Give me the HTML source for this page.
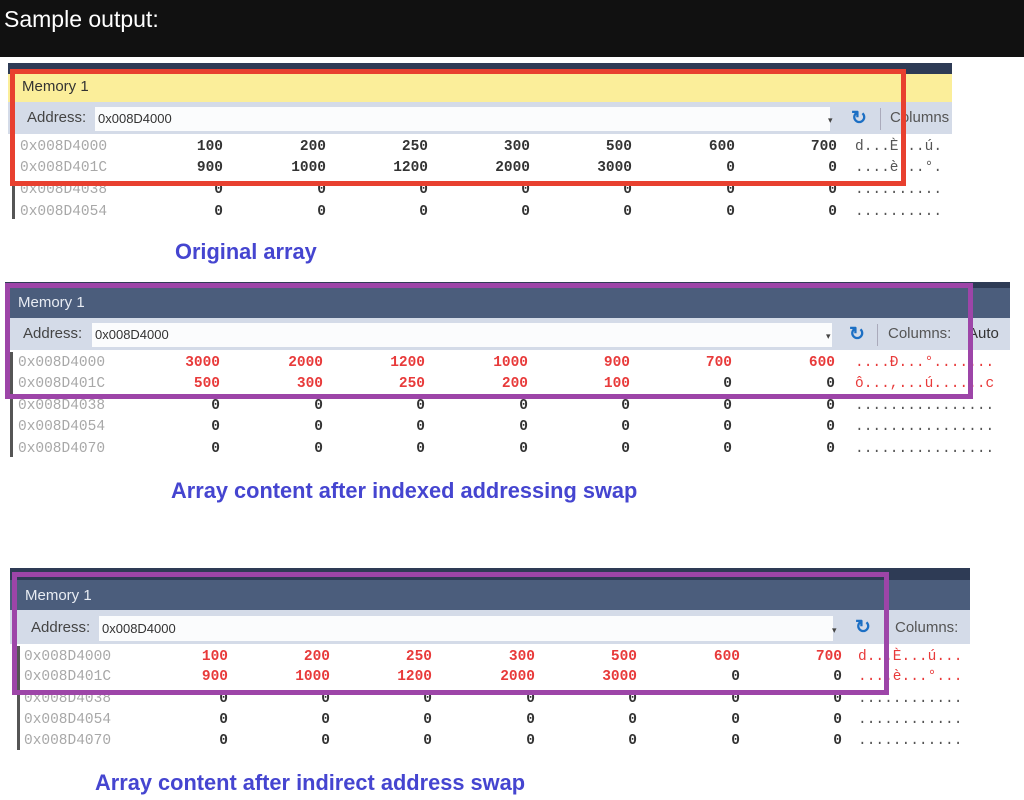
<!DOCTYPE html>
<html><head><meta charset="utf-8"><style>
*{margin:0;padding:0;box-sizing:border-box}
body{width:1024px;height:800px;background:#fff;position:relative;overflow:hidden;font-family:"Liberation Sans",sans-serif}
.a{position:absolute}
.hdr{left:0;top:0;width:1024px;height:57px;background:#111}
.hdr span{position:absolute;left:4px;top:6px;color:#fff;font-size:23px}
.row{position:absolute;height:20px;font-family:"Liberation Mono",monospace;font-size:14.5px;font-weight:bold;color:#333;white-space:nowrap;line-height:20px}
.row .ad{position:absolute;left:0;color:#a8a8a8;font-weight:normal}
.row .n{position:absolute;text-align:right;width:60px}
.row .s{position:absolute;color:#555;font-weight:normal;letter-spacing:0px}
.red{color:#e83a3a!important}
.ui{font-size:15px;color:#333}
.cap{position:absolute;color:#4545d0;font-weight:bold;font-size:21.8px;white-space:nowrap}
.box{position:absolute;border-style:solid}
</style></head><body>
<div class="a hdr"><span>Sample output:</span></div>

<!-- Panel 1 -->
<div class="a" style="left:8px;top:63px;width:944px;height:11px;background:#2e3b55"></div>
<div class="a" style="left:8px;top:74px;width:944px;height:28px;background:#fbee9a"></div>
<div class="a ui" style="left:22px;top:78px;">Memory 1</div>
<div class="a" style="left:8px;top:102px;width:944px;height:32px;background:#d4dbe8"></div>
<div class="a ui" style="left:27px;top:109px;color:#444">Address:</div>
<div class="a" style="left:95px;top:107px;width:735px;height:24px;background:#fbfcfd"></div>
<div class="a ui" style="left:98px;top:111px;font-size:13px">0x008D4000</div>
<div class="a" style="left:828px;top:115px;font-size:9px;color:#444">▾</div>
<div class="a" style="left:851px;top:107px;font-size:19px;color:#1c6fc4;font-weight:bold">↻</div>
<div class="a" style="left:880px;top:108px;width:1px;height:22px;background:#aab"></div>
<div class="a ui" style="left:890px;top:109px;color:#555">Columns</div>
<div class="a" style="left:8px;top:135px;width:944px;height:90px;background:#fff"></div>
<div class="a" style="left:12px;top:135px;width:3px;height:84px;background:#555"></div>

<div class="row" style="left:20px;top:137px"><span class="ad">0x008D4000</span><span class="n" style="left:143px">100</span><span class="n" style="left:246px">200</span><span class="n" style="left:348px">250</span><span class="n" style="left:450px">300</span><span class="n" style="left:552px">500</span><span class="n" style="left:655px">600</span><span class="n" style="left:757px">700</span><span class="s" style="left:835px">d...È...ú.</span></div>
<div class="row" style="left:20px;top:158px"><span class="ad">0x008D401C</span><span class="n" style="left:143px">900</span><span class="n" style="left:246px">1000</span><span class="n" style="left:348px">1200</span><span class="n" style="left:450px">2000</span><span class="n" style="left:552px">3000</span><span class="n" style="left:655px">0</span><span class="n" style="left:757px">0</span><span class="s" style="left:835px">....è...°.</span></div>
<div class="row" style="left:20px;top:180px"><span class="ad">0x008D4038</span><span class="n" style="left:143px">0</span><span class="n" style="left:246px">0</span><span class="n" style="left:348px">0</span><span class="n" style="left:450px">0</span><span class="n" style="left:552px">0</span><span class="n" style="left:655px">0</span><span class="n" style="left:757px">0</span><span class="s" style="left:835px">..........</span></div>
<div class="row" style="left:20px;top:202px"><span class="ad">0x008D4054</span><span class="n" style="left:143px">0</span><span class="n" style="left:246px">0</span><span class="n" style="left:348px">0</span><span class="n" style="left:450px">0</span><span class="n" style="left:552px">0</span><span class="n" style="left:655px">0</span><span class="n" style="left:757px">0</span><span class="s" style="left:835px">..........</span></div>
<div class="box" style="left:10px;top:69px;width:896px;height:117px;border-width:5px;border-color:#e8402f"></div>
<div class="cap" style="left:175px;top:239px">Original array</div>

<!-- Panel 2 -->
<div class="a" style="left:5px;top:282px;width:1005px;height:6px;background:#2e3b55"></div>
<div class="a" style="left:5px;top:288px;width:1005px;height:30px;background:#4b5d7c"></div>
<div class="a ui" style="left:18px;top:294px;color:#e8ecf3">Memory 1</div>
<div class="a" style="left:5px;top:318px;width:1005px;height:32px;background:#d4dbe8"></div>
<div class="a ui" style="left:23px;top:325px;color:#444">Address:</div>
<div class="a" style="left:92px;top:323px;width:740px;height:24px;background:#fbfcfd"></div>
<div class="a ui" style="left:95px;top:327px;font-size:13px">0x008D4000</div>
<div class="a" style="left:826px;top:331px;font-size:9px;color:#444">▾</div>
<div class="a" style="left:849px;top:323px;font-size:19px;color:#1c6fc4;font-weight:bold">↻</div>
<div class="a" style="left:877px;top:324px;width:1px;height:22px;background:#aab"></div>
<div class="a ui" style="left:888px;top:325px;color:#555">Columns:</div>
<div class="a ui" style="left:968px;top:325px;color:#333">Auto</div>
<div class="a" style="left:10px;top:352px;width:3px;height:105px;background:#555"></div>
<div class="row" style="left:18px;top:353px"><span class="ad">0x008D4000</span><span class="n red" style="left:142px">3000</span><span class="n red" style="left:245px">2000</span><span class="n red" style="left:347px">1200</span><span class="n red" style="left:450px">1000</span><span class="n red" style="left:552px">900</span><span class="n red" style="left:654px">700</span><span class="n red" style="left:757px">600</span><span class="s red" style="left:837px">....Ð...°.......</span></div>
<div class="row" style="left:18px;top:374px"><span class="ad">0x008D401C</span><span class="n red" style="left:142px">500</span><span class="n red" style="left:245px">300</span><span class="n red" style="left:347px">250</span><span class="n red" style="left:450px">200</span><span class="n red" style="left:552px">100</span><span class="n" style="left:654px">0</span><span class="n" style="left:757px">0</span><span class="s red" style="left:837px">ô...,...ú......c</span></div>
<div class="row" style="left:18px;top:396px"><span class="ad">0x008D4038</span><span class="n" style="left:142px">0</span><span class="n" style="left:245px">0</span><span class="n" style="left:347px">0</span><span class="n" style="left:450px">0</span><span class="n" style="left:552px">0</span><span class="n" style="left:654px">0</span><span class="n" style="left:757px">0</span><span class="s" style="left:837px">................</span></div>
<div class="row" style="left:18px;top:417px"><span class="ad">0x008D4054</span><span class="n" style="left:142px">0</span><span class="n" style="left:245px">0</span><span class="n" style="left:347px">0</span><span class="n" style="left:450px">0</span><span class="n" style="left:552px">0</span><span class="n" style="left:654px">0</span><span class="n" style="left:757px">0</span><span class="s" style="left:837px">................</span></div>
<div class="row" style="left:18px;top:439px"><span class="ad">0x008D4070</span><span class="n" style="left:142px">0</span><span class="n" style="left:245px">0</span><span class="n" style="left:347px">0</span><span class="n" style="left:450px">0</span><span class="n" style="left:552px">0</span><span class="n" style="left:654px">0</span><span class="n" style="left:757px">0</span><span class="s" style="left:837px">................</span></div>
<div class="box" style="left:5px;top:283px;width:968px;height:116px;border-width:5px;border-color:#9d45a8"></div>
<div class="cap" style="left:171px;top:478px">Array content after indexed addressing swap</div>

<!-- Panel 3 -->
<div class="a" style="left:10px;top:568px;width:960px;height:12px;background:#2e3b55"></div>
<div class="a" style="left:10px;top:580px;width:960px;height:30px;background:#4b5d7c"></div>
<div class="a ui" style="left:25px;top:587px;color:#e8ecf3">Memory 1</div>
<div class="a" style="left:10px;top:610px;width:960px;height:34px;background:#d4dbe8"></div>
<div class="a ui" style="left:31px;top:619px;color:#444">Address:</div>
<div class="a" style="left:99px;top:616px;width:734px;height:25px;background:#fbfcfd"></div>
<div class="a ui" style="left:102px;top:621px;font-size:13px">0x008D4000</div>
<div class="a" style="left:832px;top:625px;font-size:9px;color:#444">▾</div>
<div class="a" style="left:855px;top:616px;font-size:19px;color:#1c6fc4;font-weight:bold">↻</div>
<div class="a ui" style="left:895px;top:619px;color:#555">Columns:</div>
<div class="a" style="left:17px;top:646px;width:3px;height:104px;background:#555"></div>
<div class="row" style="left:24px;top:647px"><span class="ad">0x008D4000</span><span class="n red" style="left:144px">100</span><span class="n red" style="left:246px">200</span><span class="n red" style="left:348px">250</span><span class="n red" style="left:451px">300</span><span class="n red" style="left:553px">500</span><span class="n red" style="left:656px">600</span><span class="n red" style="left:758px">700</span><span class="s red" style="left:834px">d...È...ú...</span></div>
<div class="row" style="left:24px;top:667px"><span class="ad">0x008D401C</span><span class="n red" style="left:144px">900</span><span class="n red" style="left:246px">1000</span><span class="n red" style="left:348px">1200</span><span class="n red" style="left:451px">2000</span><span class="n red" style="left:553px">3000</span><span class="n" style="left:656px">0</span><span class="n" style="left:758px">0</span><span class="s red" style="left:834px">....è...°...</span></div>
<div class="row" style="left:24px;top:689px"><span class="ad">0x008D4038</span><span class="n" style="left:144px">0</span><span class="n" style="left:246px">0</span><span class="n" style="left:348px">0</span><span class="n" style="left:451px">0</span><span class="n" style="left:553px">0</span><span class="n" style="left:656px">0</span><span class="n" style="left:758px">0</span><span class="s" style="left:834px">............</span></div>
<div class="row" style="left:24px;top:710px"><span class="ad">0x008D4054</span><span class="n" style="left:144px">0</span><span class="n" style="left:246px">0</span><span class="n" style="left:348px">0</span><span class="n" style="left:451px">0</span><span class="n" style="left:553px">0</span><span class="n" style="left:656px">0</span><span class="n" style="left:758px">0</span><span class="s" style="left:834px">............</span></div>
<div class="row" style="left:24px;top:731px"><span class="ad">0x008D4070</span><span class="n" style="left:144px">0</span><span class="n" style="left:246px">0</span><span class="n" style="left:348px">0</span><span class="n" style="left:451px">0</span><span class="n" style="left:553px">0</span><span class="n" style="left:656px">0</span><span class="n" style="left:758px">0</span><span class="s" style="left:834px">............</span></div>
<div class="box" style="left:12px;top:572px;width:877px;height:123px;border-width:5px;border-color:#9d45a8"></div>
<div class="cap" style="left:95px;top:770px">Array content after indirect address swap</div>
</body></html>
